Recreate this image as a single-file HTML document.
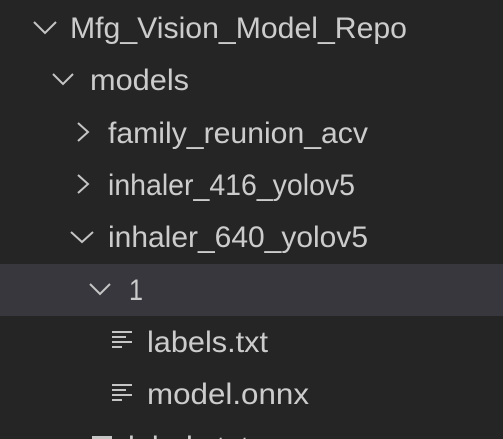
<!DOCTYPE html>
<html><head><style>
html,body{margin:0;padding:0;background:#252526;width:503px;height:439px;overflow:hidden}
svg{display:block}
text{font-family:"Liberation Sans",sans-serif;font-size:30px;fill:#cccccc}
.c{fill:none;stroke:#c5c5c5;stroke-width:2}
</style></head><body>
<svg width="503" height="439" viewBox="0 0 503 439">
<rect x="0" y="0" width="503" height="439" fill="#252526"/>
<rect x="0" y="264" width="503" height="52" fill="#37373d"/>
<path class="c" d="M34 22 L45 33 L56 22"/>
<text x="70" y="38" textLength="337" lengthAdjust="spacingAndGlyphs">Mfg_Vision_Model_Repo</text>
<path class="c" d="M53 74 L63 84 L73 74"/>
<text x="90" y="90" textLength="99" lengthAdjust="spacingAndGlyphs">models</text>
<path class="c" d="M78 123 L88 132 L78 141"/>
<text x="108" y="143" textLength="260" lengthAdjust="spacingAndGlyphs">family_reunion_acv</text>
<path class="c" d="M78 175 L88 184 L78 193"/>
<text x="108" y="195" textLength="247" lengthAdjust="spacingAndGlyphs">inhaler_416_yolov5</text>
<path class="c" d="M71 232 L82 242 L93 232"/>
<text x="108" y="247" textLength="260" lengthAdjust="spacingAndGlyphs">inhaler_640_yolov5</text>
<path class="c" d="M90 284 L100 294 L110 284"/>
<text x="129" y="300" textLength="14" lengthAdjust="spacingAndGlyphs">1</text>
<g fill="#c5c5c5">
<rect x="112" y="331" width="20" height="2"/><rect x="112" y="336" width="14" height="2"/><rect x="112" y="341" width="20" height="2"/><rect x="112" y="346" width="10" height="2"/>
<rect x="112" y="384" width="20" height="2"/><rect x="112" y="389" width="14" height="2"/><rect x="112" y="394" width="20" height="2"/><rect x="112" y="399" width="10" height="2"/>
<rect x="92" y="436" width="20" height="3"/>
</g>
<text x="147" y="352" textLength="121" lengthAdjust="spacingAndGlyphs">labels.txt</text>
<text x="147" y="404" textLength="162" lengthAdjust="spacingAndGlyphs">model.onnx</text>
<text x="128" y="457" textLength="121" lengthAdjust="spacingAndGlyphs">labels.txt</text>
</svg>
</body></html>
